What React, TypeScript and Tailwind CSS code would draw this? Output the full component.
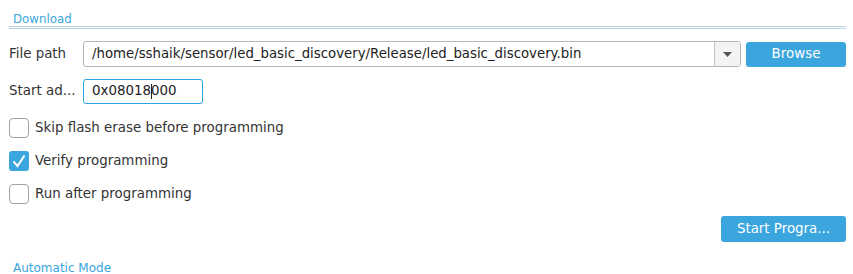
import React from 'react';

const Check = ({ checked, label }: { checked?: boolean; label: string }) => (
  <div className="flex h-[20px] items-center gap-[6px]">
    {checked ? (
      <span className="flex h-[20px] w-[20px] items-center justify-center rounded-[3px] bg-[#3aa6dd]">
        <svg width="16" height="16" viewBox="0 0 16 16">
          <path d="M2.5 8.5 L6.5 13 L13.5 2.5" fill="none" stroke="#fff" strokeWidth="2" />
        </svg>
      </span>
    ) : (
      <span className="h-[20px] w-[20px] rounded-[4px] border border-[#a0a0a0] bg-white" />
    )}
    <span className="text-[13.4px] text-[#333]">{label}</span>
  </div>
);

export default function App() {
  return (
    <div
      className="h-[274px] w-[853px] overflow-hidden bg-white pl-[9px] pr-[7px]"
      style={{ fontFamily: '"DejaVu Sans", sans-serif' }}
    >
      <div className="pt-[12px]">
        <div className="h-[14px] pl-[4px] text-[11.8px] leading-[14px] text-[#3aa6dd]">Download</div>
        <div className="h-px bg-[#c9ced1]" />
        <div className="h-px" />
        <div className="h-px bg-[#a9dbec]" />
      </div>

      <div className="mt-[12px] flex h-[26px] items-center">
        <span className="w-[74px] text-[13.4px] text-[#333]">File path</span>
        <div className="flex h-[26px] w-[658px] items-center rounded-[3px] border border-[#b5b5b5] bg-white">
          <span className="flex-1 truncate pl-[8px] text-[13.3px] text-[#222]">
            /home/sshaik/sensor/led_basic_discovery/Release/led_basic_discovery.bin
          </span>
          <span className="flex h-full w-[26px] items-center justify-center border-l border-[#c4c4c4] bg-[#f3f3f3]">
            <svg width="9" height="5" viewBox="0 0 9 5">
              <path d="M0 0 H9 L4.5 5 Z" fill="#555" />
            </svg>
          </span>
        </div>
        <button className="ml-[5px] h-[25px] w-[100px] rounded-[3px] bg-[#3aa6dd] text-[13.4px] text-white">
          Browse
        </button>
      </div>

      <div className="mt-[12px] flex h-[25px] items-center">
        <span className="w-[74px] text-[13.4px] text-[#333]">Start ad...</span>
        <div className="flex h-[25px] w-[120px] items-center rounded-[3px] border-[1.5px] border-[#2fa3de] pl-[8px] text-[13.4px] text-[#222]">
          0x08018<span className="mx-[-0.5px] inline-block h-[15px] w-px bg-[#222]" />000
        </div>
      </div>

      <div className="mt-[14px] flex flex-col gap-[13px]">
        <Check label="Skip flash erase before programming" />
        <Check checked label="Verify programming" />
        <Check label="Run after programming" />
      </div>

      <div className="mt-[12px] flex justify-end">
        <button className="h-[26px] w-[125px] rounded-[3px] bg-[#3aa6dd] text-[13.4px] text-white">
          Start Progra...
        </button>
      </div>

      <div className="mt-[19px] h-[14px] pl-[4px] text-[12px] leading-[14px] text-[#3aa6dd]">Automatic Mode</div>
    </div>
  );
}
